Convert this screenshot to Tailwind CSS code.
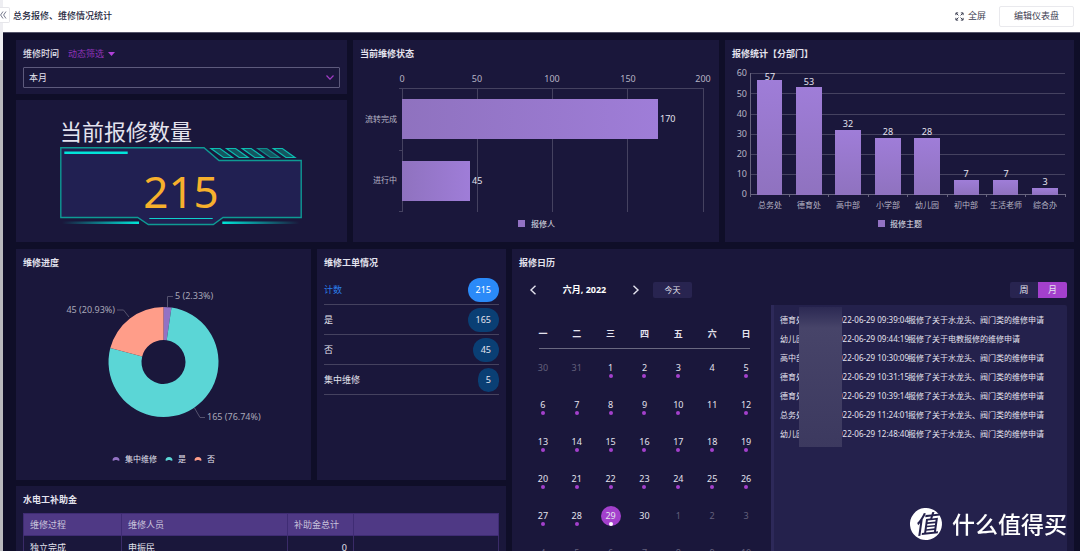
<!DOCTYPE html>
<html lang="zh-CN">
<head>
<meta charset="utf-8">
<meta name="viewport" content="width=device-width, initial-scale=1">
<title>总务报修、维修情况统计</title>
<script src="https://cdn.jsdelivr.net/npm/@tailwindcss/browser@4"></script>
</head>
<body class="flex h-screen overflow-hidden bg-white font-['Noto_Sans','Noto_Sans_CJK_SC',sans-serif] text-[9px] leading-3 text-[#e4e3ee]">

<!-- Collapsed side rail -->
<aside class="relative w-[3px] shrink-0 bg-[#b9b9bd]">
  <div class="h-15 bg-[#eeeef2]"></div>
  <button type="button" aria-label="展开侧栏" class="absolute top-[7px] left-0 flex h-4 w-[10px] items-center rounded-r-xs border border-l-0 border-[#e6e6ea] bg-white">
    <svg viewBox="0 0 7 8" class="h-2 w-[7px]" fill="none" stroke="#666a80" stroke-width="0.9"><path d="M3 .5 .6 4 3 7.500M6 .5 3.600 4 6 7.500"/></svg>
  </button>
</aside>

<div class="flex min-w-0 flex-1 flex-col">
  <header class="flex h-8 shrink-0 items-center justify-between pr-1.5 pl-2.5 text-[#3d4052]">
    <h1 class="font-medium text-[#23263c]">总务报修、维修情况统计</h1>
    <div class="flex items-center gap-[13px]">
      <button type="button" class="flex items-center gap-1">
        <svg viewBox="0 0 10 10" class="size-[9px]" fill="none" stroke="#3d4052" stroke-width="1.1"><path d="M1 3.500V1h2.500M6.500 1H9v2.500M9 6.500V9H6.500M3.500 9H1V6.500M1.300 1.300l2.500 2.500M8.700 1.300 6.200 3.800M8.700 8.700 6.200 6.200M1.300 8.700l2.500-2.500"/></svg>
        全屏
      </button>
      <button type="button" class="h-[21px] w-[75px] rounded-xs border border-[#e9e9ed] bg-white">编辑仪表盘</button>
    </div>
  </header>

  <main class="flex min-h-0 flex-1 flex-col gap-[7px] overflow-hidden border-t border-[#55556a] bg-[#0f0e28] pt-[7px] pr-1.5 pl-[13px]">

    <div class="grid shrink-0 grid-cols-[331fr_366fr_349fr] gap-1.5">
      <div class="flex flex-col gap-1.5">
        <section class="bg-[#1a173b] px-[7px] pt-2 pb-1.5">
          <div class="flex items-center gap-[9px]">
            <label for="period" class="font-medium">维修时间</label>
            <button type="button" class="flex items-center gap-1 text-[#9033b8]">动态筛选
              <svg viewBox="0 0 7 4" class="h-1 w-[7px]" fill="#b040d8"><path d="M0 0h7L3.500 4z"/></svg>
            </button>
          </div>
          <div class="relative mt-[7px]">
            <select id="period" class="block h-[21px] w-full appearance-none rounded-[1px] border border-[#5d5a7c] bg-[#1a173b] px-[5px]">
              <option>本月</option>
            </select>
            <svg viewBox="0 0 8 5" class="pointer-events-none absolute top-2 right-[6px] h-[5px] w-2" fill="none" stroke="#a03cc4" stroke-width="1.2"><path d="M.5.5 4 4.200 7.500.5"/></svg>
          </div>
        </section>

        <section class="flex flex-1 items-start justify-center bg-[#1a173b] pt-[19px] pr-px">
          <div class="w-[242px]">
            <h2 class="h-7 text-[22px] leading-6 whitespace-nowrap">当前报修数量</h2>
            <svg viewBox="0 0 242 79" class="block w-full">
              <defs>
                <linearGradient id="glowL"><stop offset="0" stop-color="#00e5d8" stop-opacity="0"/><stop offset="1" stop-color="#00e5d8"/></linearGradient>
                <linearGradient id="glowR"><stop offset="0" stop-color="#00e5d8"/><stop offset="1" stop-color="#00e5d8" stop-opacity="0"/></linearGradient>
              </defs>
              <path d="M.8.8H144L159 13.500H241.200V70.500H163L153.300 77.500H88.300L77.700 70.500H.8z" fill="#212052" stroke="#0e9a94" stroke-width="1.400"/>
              <path d="M4.300 5.800H67.700" stroke="#02e4da" stroke-width="2.600"/>
              <g fill="#15545f" stroke="#0cbcb0" stroke-width="1.200">
                <path d="M151 1.500h9l12.500 9h-9z"/><path d="M166.600 1.500h9l12.500 9h-9z"/><path d="M182.200 1.500h9l12.500 9h-9z"/><path d="M197.800 1.500h9l12.500 9h-9z" stroke="#0f8d8c"/><path d="M213.400 1.500h9l12.500 9h-9z"/>
              </g>
              <path d="M89.300 71.500H152.700" stroke="#0fd0cb" stroke-width="1.200"/>
              <rect x="2" y="74.500" width="77" height="2.500" fill="url(#glowL)"/>
              <rect x="162.300" y="74.500" width="77" height="2.500" fill="url(#glowR)"/>
              <text x="121" y="61" text-anchor="middle" font-size="44" fill="#f7b02c">215</text>
            </svg>
          </div>
        </section>
      </div>

      <section class="bg-[#1a173b] pt-2">
        <h2 class="px-[7px] font-bold">当前维修状态</h2>
        <svg viewBox="0 0 366 182" class="block w-full" font-size="9">
          <defs><linearGradient id="barH"><stop offset="0" stop-color="#8f72bf"/><stop offset="1" stop-color="#9f7dd8"/></linearGradient></defs>
          <path d="M46 28.500H350M49.500 28V152M46 90.500h3M46 151.500h3M124.500 28V152M199.500 28V152M274.500 28V152M350.500 28V152" stroke="#454260" fill="none"/>
          <g fill="#b5b4c4" text-anchor="middle"><text x="49" y="22">0</text><text x="124" y="22">50</text><text x="199" y="22">100</text><text x="275" y="22">150</text><text x="350" y="22">200</text></g>
          <rect x="49" y="39" width="256" height="40" fill="url(#barH)"/>
          <rect x="49" y="101" width="68" height="40" fill="url(#barH)"/>
          <g fill="#e4e3ee"><text x="307" y="62">170</text><text x="119" y="124">45</text></g>
          <g fill="#b5b4c4" text-anchor="end" font-size="8"><text x="44" y="62">流转完成</text><text x="44" y="123">进行中</text></g>
          <rect x="165" y="160" width="7" height="7" fill="#9372c4"/>
          <text x="178" y="167" font-size="8" fill="#e4e3ee">报修人</text>
        </svg>
      </section>

      <section class="bg-[#1a173b] pt-2">
        <h2 class="px-[7px] font-bold">报修统计【分部门】</h2>
        <svg viewBox="0 0 349 182" class="block w-full" font-size="9">
          <defs><linearGradient id="barV" x2="0" y2="1"><stop offset="0" stop-color="#9f7dd8"/><stop offset="1" stop-color="#8f72bf"/></linearGradient></defs>
          <path d="M25 13.500H340M25 33.500H340M25 54.500H340M25 74.500H340M25 94.500H340M25 114.500H340" stroke="#454260"/>
          <path d="M25.500 13V137M25 134.500H340M64.500 134v3M103.500 134v3M143.500 134v3M182.500 134v3M222.500 134v3M261.500 134v3M300.500 134v3M340.500 134v3" stroke="#67647f"/>
          <g fill="#b5b4c4" text-anchor="end"><text x="22" y="16">60</text><text x="22" y="37">50</text><text x="22" y="57">40</text><text x="22" y="77">30</text><text x="22" y="97">20</text><text x="22" y="117">10</text><text x="22" y="137">0</text></g>
          <g fill="url(#barV)">
            <rect x="32" y="20" width="25" height="115"/><rect x="71" y="27" width="26" height="108"/><rect x="110" y="70" width="26" height="65"/><rect x="150" y="78" width="26" height="57"/><rect x="189" y="78" width="26" height="57"/><rect x="229" y="120" width="25" height="15"/><rect x="268" y="120" width="25" height="15"/><rect x="307" y="128" width="26" height="7"/>
          </g>
          <g fill="#e4e3ee" text-anchor="middle"><text x="45" y="20">57</text><text x="84" y="25">53</text><text x="123" y="67">32</text><text x="163" y="75">28</text><text x="202" y="75">28</text><text x="241" y="117">7</text><text x="281" y="117">7</text><text x="320" y="125">3</text></g>
          <g fill="#b5b4c4" text-anchor="middle" font-size="8"><text x="45" y="148">总务处</text><text x="84" y="148">德育处</text><text x="123" y="148">高中部</text><text x="163" y="148">小学部</text><text x="202" y="148">幼儿园</text><text x="241" y="148">初中部</text><text x="281" y="148">生活老师</text><text x="320" y="148">综合办</text></g>
          <rect x="153" y="160" width="7" height="7" fill="#9372c4"/>
          <text x="165" y="167" font-size="8" fill="#e4e3ee">报修主题</text>
        </svg>
      </section>
    </div>

    <div class="grid min-h-0 flex-1 grid-cols-[490fr_562fr] gap-1.5">
      <div class="flex flex-col gap-1.5">
        <div class="grid shrink-0 grid-cols-[295fr_189fr] gap-1.5">
          <section class="bg-[#1a173b] pt-2">
            <h2 class="px-[7px] font-bold">维修进度</h2>
            <svg viewBox="0 0 295 211" class="block w-full" font-size="9">
              <path d="M147.500 38A55 55 0 0 1 155.500 38.600L150.700 71.200A22 22 0 0 0 147.500 71z" fill="#9372c4"/>
              <path d="M155.500 38.600A55 55 0 1 1 94.300 79.100L126.200 87.400A22 22 0 1 0 150.700 71.200z" fill="#5bd6d6"/>
              <path d="M94.300 79.100A55 55 0 0 1 147.500 38V71A22 22 0 0 0 126.200 87.400z" fill="#ff9d89"/>
              <path d="M151.500 38V27.500H157M113 48 107.500 41H101M178.500 139 184 148.500H189" stroke="#55526e" fill="none"/>
              <g fill="#a9a8b8"><text x="159" y="30">5 (2.33%)</text><text x="99" y="44" text-anchor="end">45 (20.93%)</text><text x="191" y="151">165 (76.74%)</text></g>
              <path d="M96.500 191.500a3.500 3.500 0 0 1 7 0q-1.500.5-2.500-.5h-2q-1 1-2.500.5z" fill="#9372c4"/>
              <path d="M149.500 191.500a3.500 3.500 0 0 1 7 0q-1.500.5-2.500-.5h-2q-1 1-2.500.5z" fill="#5bd6d6"/>
              <path d="M178.500 191.500a3.500 3.500 0 0 1 7 0q-1.500.5-2.500-.5h-2q-1 1-2.500.5z" fill="#ff9d89"/>
              <g fill="#e4e3ee" font-size="8"><text x="109" y="193">集中维修</text><text x="162" y="193">是</text><text x="191" y="193">否</text></g>
            </svg>
          </section>

          <section class="bg-[#1a173b] px-[7px] pt-2">
            <h2 class="font-bold">维修工单情况</h2>
            <ul class="mt-1.5">
              <li class="flex h-[30px] items-center justify-between border-b border-[#45425f] text-[#2a7de8]">计数 <span class="rounded-full bg-[#2a8af8] px-2 py-1.5 text-white">215</span></li>
              <li class="flex h-[30px] items-center justify-between border-b border-[#45425f]">是 <span class="rounded-full bg-[#0a3f74] px-2 py-1.5">165</span></li>
              <li class="flex h-[30px] items-center justify-between border-b border-[#45425f]">否 <span class="rounded-full bg-[#0a3f74] px-2 py-1.5">45</span></li>
              <li class="flex h-[30px] items-center justify-between border-b border-[#45425f]">集中维修 <span class="rounded-full bg-[#0a3f74] px-2 py-1.5">5</span></li>
            </ul>
          </section>
        </div>

        <section class="min-h-0 flex-1 bg-[#1a173b] px-[7px] pt-2">
          <h2 class="font-bold">水电工补助金</h2>
          <table class="mt-[7px] w-full table-fixed border-collapse text-left">
            <colgroup><col class="w-[98px]"><col class="w-[166px]"><col class="w-[66px]"><col></colgroup>
            <thead class="bg-[#4f3985] text-[#c9c3dc]">
              <tr class="h-[22px]">
                <th class="border border-[#3f2c74] px-1.5 font-normal">维修过程</th>
                <th class="border border-[#3f2c74] px-1.5 font-normal">维修人员</th>
                <th class="border border-[#3f2c74] px-1.5 font-normal">补助金总计</th>
                <th class="border border-[#3f2c74]"></th>
              </tr>
            </thead>
            <tbody>
              <tr class="h-[25px]">
                <td class="border border-[#3a2b68] px-1.5">独立完成</td>
                <td class="border border-[#3a2b68] px-1.5">申振民</td>
                <td class="border border-[#3a2b68] px-1.5 text-right">0</td>
                <td class="border border-[#3a2b68]"></td>
              </tr>
            </tbody>
          </table>
        </section>
      </div>

      <section class="flex min-h-0 flex-col bg-[#1a173b] px-[7px] pt-2">
        <h2 class="font-bold">报修日历</h2>
        <div class="mt-[13px] flex h-4 shrink-0 items-center justify-between">
          <div class="flex items-center pl-[10px]">
            <button type="button" aria-label="上个月"><svg viewBox="0 0 8 10" class="h-[10px] w-2" fill="none" stroke="#e4e3ee" stroke-width="1.400"><path d="M6.500.8 2 5l4.500 4.200"/></svg></button>
            <h3 class="w-[95px] text-center font-bold text-white">六月, 2022</h3>
            <button type="button" aria-label="下个月"><svg viewBox="0 0 8 10" class="h-[10px] w-2" fill="none" stroke="#e4e3ee" stroke-width="1.400"><path d="M1.500.8 6 5 1.500 9.200"/></svg></button>
            <button type="button" class="ml-[13px] h-4 w-[39px] rounded-xs bg-[#282450] text-[8px]">今天</button>
          </div>
          <div class="flex">
            <button type="button" class="h-4 w-7 rounded-l-xs bg-[#282450]">周</button>
            <button type="button" class="h-4 w-[29px] rounded-r-xs bg-[#a340cc]">月</button>
          </div>
        </div>

        <div class="mt-[7px] grid min-h-0 flex-1 grid-cols-[252fr_296fr]">
          <div class="pt-[18px] pr-2 pl-[7px]">
            <table class="w-full table-fixed text-center">
              <thead>
                <tr class="h-[26px] align-top [&>th]:relative [&>th]:pt-[5px] [&>th]:after:absolute [&>th]:after:inset-x-0 [&>th]:after:bottom-0 [&>th]:after:h-px [&>th]:after:bg-[#6a6880] [&>th]:after:content-[''] [&>th:first-child]:after:left-[13px] [&>th:last-child]:after:right-[13px]">
                  <th>一</th><th>二</th><th>三</th><th>四</th><th>五</th><th>六</th><th>日</th>
                </tr>
              </thead>
              <tbody id="days"></tbody>
            </table>
          </div>
          <div class="relative rounded-tr-xs border-l-3 border-[#2d2959] bg-[#24214c] pt-[5px] pl-[6px]">
            <ul id="events" class="text-[8px] whitespace-nowrap"></ul>
            <div class="absolute top-[2px] left-[25px] h-[140px] w-[43px] bg-linear-to-b from-[#2c2953] via-[#474469] via-15% to-[#3c395f]"></div>
          </div>
        </div>
      </section>
    </div>
  </main>
</div>

<!-- Site watermark -->
<div class="fixed right-[13px] bottom-[11px] flex items-center gap-[10px] text-white">
  <span class="flex size-8 -rotate-6 items-center justify-center rounded-full bg-white text-2xl font-medium text-[#24214c] italic">值</span>
  <span class="text-[23px] leading-8 font-medium">什么值得买</span>
</div>

<script>
  const weeks = [
    [30, 31, 1, 2, 3, 4, 5],
    [6, 7, 8, 9, 10, 11, 12],
    [13, 14, 15, 16, 17, 18, 19],
    [20, 21, 22, 23, 24, 25, 26],
    [27, 28, 29, 30, 1, 2, 3],
    [4, 5, 6, 7, 8, 9, 10]
  ];
  const quietDays = [4, 11, 30];
  document.getElementById('days').innerHTML = weeks.map((week, w) =>
    '<tr class="h-[37px]">' + week.map(day => {
      const outside = (w === 0 && day > 20) || (w > 3 && day < 20);
      const today = !outside && day === 29;
      const dot = outside || quietDays.includes(day) ? ''
        : `<i class="absolute bottom-0 left-1/2 size-1 -translate-x-1/2 rounded-full ${today ? 'bg-white' : 'bg-[#a340cc]'}"></i>`;
      return `<td class="p-0"><span class="relative mx-auto flex size-5 items-center justify-center rounded-full ${outside ? 'text-[#63607c]' : ''} ${today ? 'bg-[#a340cc]' : ''}">${day}${dot}</span></td>`;
    }).join('') + '</tr>').join('');

  const water = '报修了关于水龙头、阀门类的维修申请';
  const events = [
    ['德育处', '022-06-29 09:39:04', water],
    ['幼儿园', '022-06-29 09:44:19', '报修了关于电教报修的维修申请'],
    ['高中部', '022-06-29 10:30:09', water],
    ['德育处', '022-06-29 10:31:15', water],
    ['德育处', '022-06-29 10:39:14', water],
    ['总务处', '022-06-29 11:24:01', water],
    ['幼儿园', '022-06-29 12:48:40', water]
  ];
  document.getElementById('events').innerHTML = events.map(([dept, time, text]) =>
    `<li class="flex h-[19px] items-center"><span class="w-[58px]">${dept}</span><span class="w-[70px] text-right">${time}</span><span>${text}</span></li>`).join('');
</script>
</body>
</html>
